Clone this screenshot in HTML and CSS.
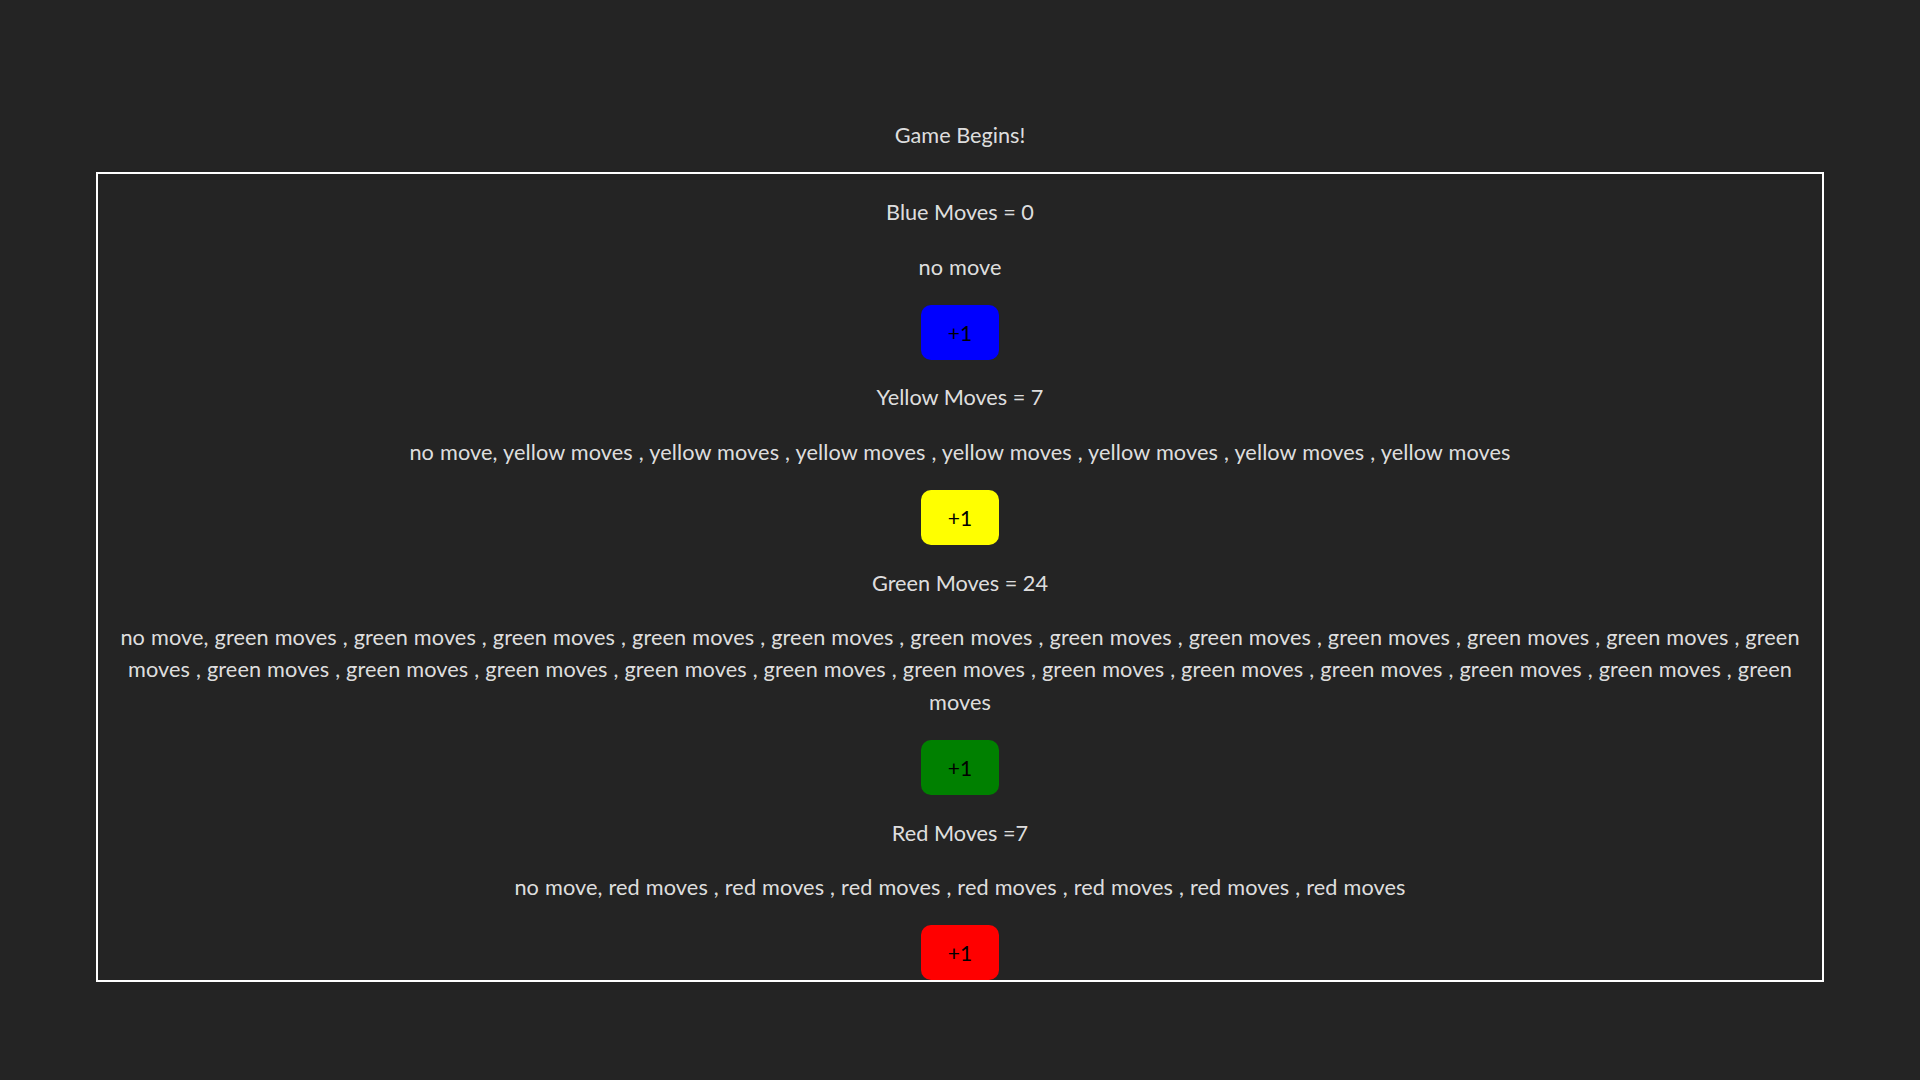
FILE: index.html
```html
<!DOCTYPE html>
<html lang="en">
<head>
<meta charset="utf-8">
<title>Game</title>
<link rel="stylesheet" href="styles.css">
</head>
<body>
<div class="app">
  <p class="title">Game Begins!</p>
  <div class="board">
    <p class="label">Blue Moves = 0</p>
    <p class="moves">no move</p>
    <button class="plus blue">+1</button>

    <p class="label">Yellow Moves = 7</p>
    <p class="moves">no move, yellow moves , yellow moves , yellow moves , yellow moves , yellow moves , yellow moves , yellow moves</p>
    <button class="plus yellow">+1</button>

    <p class="label">Green Moves = 24</p>
    <p class="moves">no move, green moves , green moves , green moves , green moves , green moves , green moves , green moves , green moves , green moves , green moves , green moves , green moves , green moves , green moves , green moves , green moves , green moves , green moves , green moves , green moves , green moves , green moves , green moves , green moves</p>
    <button class="plus green">+1</button>

    <p class="label">Red Moves =7</p>
    <p class="moves">no move, red moves , red moves , red moves , red moves , red moves , red moves , red moves</p>
    <button class="plus red">+1</button>
  </div>
</div>
</body>
</html>
```
FILE: styles.css
```css
html, body {
  margin: 0;
  padding: 0;
  background: #242424;
}

body {
  font-family: "Lato", "Open Sans", sans-serif;
  font-size: 21.7px;
  line-height: 32.5px;
  color: rgba(255, 255, 255, 0.87);
  height: 1080px;
  overflow: hidden;
}

.app {
  padding-top: 119px;
  display: flex;
  flex-direction: column;
  align-items: center;
}

.title {
  margin: 0;
  text-align: center;
}

.board {
  box-sizing: border-box;
  width: 1728px;
  height: 810px;
  margin-top: 20.5px;
  border: 2px solid #ffffff;
  overflow: hidden;
  display: flex;
  flex-direction: column;
  align-items: center;
  gap: 21.7px;
  padding: 22.4px 20px 0;
  text-align: center;
}

.board p {
  margin: 0;
}

.moves {
  width: 100%;
  letter-spacing: 0.1px;
  word-spacing: 0.3px;
}

.plus {
  flex: none;
  width: 78px;
  height: 55px;
  border: none;
  border-radius: 10px;
  font-family: "Lato", "Open Sans", sans-serif;
  font-size: 21px;
  color: #000000;
  padding: 0;
  display: flex;
  align-items: center;
  justify-content: center;
  cursor: pointer;
}

.blue { background: #0000ff; }
.yellow { background: #ffff00; }
.green { background: #008000; }
.red { background: #ff0000; }
```
